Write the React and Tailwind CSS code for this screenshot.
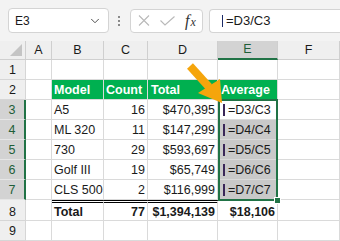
import { ChevronDown } from 'lucide-react';

// spreadsheet data, columns B..E
const rows = [
  { n: 1 },
  { n: 2, head: true, b: 'Model', c: 'Count', d: 'Total', e: 'Average' },
  { n: 3, b: 'A5', c: '16', d: '$470,395', e: '=D3/C3', f: true },
  { n: 4, b: 'ML 320', c: '11', d: '$147,299', e: '=D4/C4', f: true },
  { n: 5, b: '730', c: '29', d: '$593,697', e: '=D5/C5', f: true },
  { n: 6, b: 'Golf III', c: '19', d: '$65,749', e: '=D6/C6', f: true },
  { n: 7, b: 'CLS 500', c: '2', d: '$116,999', e: '=D7/C7', f: true },
  { n: 8, total: true, b: 'Total', c: '77', d: '$1,394,139', e: '$18,106' },
  { n: 9 },
];

const base = 'border-r border-b border-[#dadada] leading-[17px] whitespace-nowrap overflow-visible';

const Cursor = () => (
  <span className="inline-block w-[2px] h-[12px] bg-[#3a2658] align-[-2px] mr-[3px]" />
);

const Toolbar = () => (
  <div className="h-[41px] bg-[#f3f3f3] flex items-center">
    {/* NAME BOX */}
    <div className="ml-[8px] w-[101px] h-[25px] bg-white border border-[#d4d4d4] rounded-[4px] flex items-center justify-between pl-[6px] pr-[6px] text-[12px] text-[#1a1a1a]">
      <span>E3</span>
      <ChevronDown size={14} strokeWidth={1.6} className="text-[#444]" />
    </div>

    <div className="ml-[9px] w-[3px] flex flex-col gap-[2px]">
      <span className="w-[2px] h-[2px] bg-[#8a8a8a]" />
      <span className="w-[2px] h-[2px] bg-[#8a8a8a]" />
      <span className="w-[2px] h-[2px] bg-[#8a8a8a]" />
    </div>

    {/* CANCEL / ENTER / FX */}
    <div className="ml-[9px] w-[73px] h-[24px] bg-white border border-[#d4d4d4] rounded-[4px] flex items-center pl-[6px]">
      <svg width="12" height="11" viewBox="0 0 12 11" className="ml-[1px]">
        <path d="M1 0.5 L11 10.5 M11 0.5 L1 10.5" stroke="#b9b9b9" strokeWidth="1.1" fill="none" />
      </svg>
      <svg width="15" height="10" viewBox="0 0 15 10" className="ml-[10px]">
        <path d="M0.5 4.5 L5 9 L14.5 0.5" stroke="#b9b9b9" strokeWidth="1.1" fill="none" />
      </svg>
      <span className="ml-[10px] font-['Liberation_Serif',serif] italic text-[#333] leading-none">
        <span className="text-[16px]">f</span>
        <span className="text-[12px] ml-[1px]">x</span>
      </span>
    </div>

    {/* FORMULA INPUT */}
    <div className="ml-[6px] flex-1 h-[24px] bg-white border border-r-0 border-[#d4d4d4] rounded-l-[4px] flex items-center pl-[12px] text-[13px] text-[#1a1a1a]">
      <span className="inline-block w-[1px] h-[12px] bg-[#1b2a66] mr-[3px]" />
      <span>=D3/C3</span>
    </div>
  </div>
);

export default function App() {
  return (
    <div className="relative w-[340px] h-[241px] overflow-hidden bg-white font-['Liberation_Sans',Arial,sans-serif] text-[12.5px] text-[#1a1a1a]">
      <Toolbar />

      <div className="grid grid-cols-[26px_26px_52px_44px_70px_60px_62px]">
        {/* COLUMN HEADERS */}
        <div className="relative h-[19px] bg-[#efefef] border-r border-b border-[#cfcfcf]">
          <svg width="25" height="18" className="absolute left-0 top-0">
            <polygon points="22,3 22,15 10,15" fill="#c4c4c4" />
          </svg>
        </div>
        {['A', 'B', 'C', 'D'].map(l => (
          <div key={l} className="h-[19px] bg-[#efefef] border-r border-b border-[#cfcfcf] text-center leading-[18px]">
            {l}
          </div>
        ))}
        <div className="h-[19px] bg-[#d3d3d3] border-r border-[#cfcfcf] border-b-2 border-b-[#217346] text-center leading-[17px] text-[#1e5e38]">
          E
        </div>
        <div className="h-[19px] bg-[#efefef] border-r border-b border-[#cfcfcf] text-center leading-[18px]">
          F
        </div>

        {/* ROWS */}
        {rows.map(r => {
          const selRow = r.n >= 3 && r.n <= 7;
          // total row is one pixel taller and sits under a double rule
          const h = r.total ? 'h-[21px] pt-[4px]' : 'h-[20px] pt-[2px]';
          const cell = `${base} ${h}`;
          const head = r.head ? 'bg-[#00b050] border-[#00b050] text-white font-bold' : '';
          const tot = r.total ? 'font-bold' : '';
          const dbl = r.total ? 'border-t-[3px] border-double border-t-black !pt-[1px]' : '';
          return [
            <div
              key={`h${r.n}`}
              className={`${h} border-b leading-[17px] text-center ${
                selRow
                  ? 'bg-[#d3d3d3] border-[#e6e6e6] border-r-2 border-r-[#217346] text-[#1e5e38]'
                  : 'bg-[#efefef] border-r border-[#d6d6d6]'
              }`}
            >
              {r.n}
            </div>,
            <div key={`a${r.n}`} className={cell} />,
            <div key={`b${r.n}`} className={`${cell} pl-[2px] ${head} ${tot} ${dbl}`}>{r.b}</div>,
            <div key={`c${r.n}`} className={`${cell} ${r.head ? 'pl-[2px]' : 'text-right pr-[2px]'} ${head} ${tot} ${dbl}`}>{r.c}</div>,
            <div key={`d${r.n}`} className={`${cell} ${r.head ? 'pl-[3px]' : 'text-right pr-[2px]'} ${head} ${tot} ${dbl}`}>{r.d}</div>,
            <div
              key={`e${r.n}`}
              className={`${cell} ${r.f ? 'pl-[5px]' : r.head ? 'pl-[3px]' : 'text-right pr-[2px]'} ${head} ${tot} ${
                selRow && r.n > 3 ? 'bg-[#c9c9c9]' : ''
              }`}
            >
              {r.f && <Cursor />}
              {r.e}
            </div>,
            <div key={`f${r.n}`} className={cell} />,
          ];
        })}
      </div>

      {/* SELECTION E3:E7 */}
      <div className="absolute left-[218px] top-[99px] w-[60px] h-[102px] border-2 border-[#217346] pointer-events-none" />
      <div className="absolute left-[274px] top-[197px] w-[7px] h-[7px] bg-[#217346] border border-white" />

      {/* ORANGE ARROW */}
      <svg width="340" height="241" className="absolute left-0 top-0 pointer-events-none">
        <line x1="190" y1="66" x2="209" y2="87" stroke="#f5a50c" strokeWidth="8" />
        <polygon points="198,93 220,79 222,103" fill="#f5a50c" />
      </svg>
    </div>
  );
}
